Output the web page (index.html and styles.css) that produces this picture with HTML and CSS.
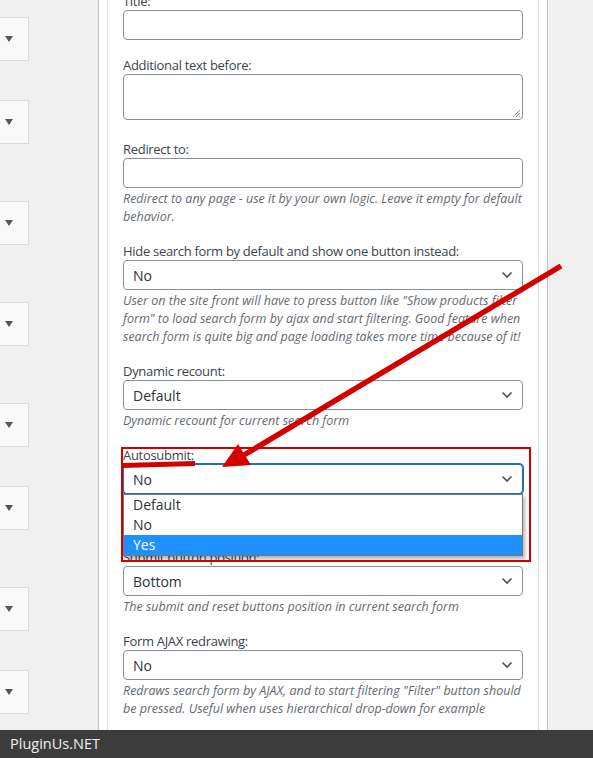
FILE: index.html
```html
<!DOCTYPE html>
<html lang="en">
<head>
<meta charset="utf-8">
<title>Search form settings</title>
<link rel="stylesheet" href="styles.css">
</head>
<body>
<div class="page">
  <aside class="rail">
    <div class="rbox first"><span class="tri"></span></div>
    <div class="rbox near"><span class="tri"></span></div>
    <div class="rbox"><span class="tri"></span></div>
    <div class="rbox"><span class="tri"></span></div>
    <div class="rbox"><span class="tri"></span></div>
    <div class="rbox near"><span class="tri"></span></div>
    <div class="rbox"><span class="tri"></span></div>
    <div class="rbox near"><span class="tri"></span></div>
  </aside>
  <section class="outer">
    <div class="inner">
      <div class="form">
        <div class="group">
          <label class="lbl">Title:</label>
          <div class="input"></div>
        </div>
        <div class="group area">
          <label class="lbl">Additional text before:</label>
          <div class="textarea">
            <svg class="grip" width="9" height="9" viewBox="0 0 9 9"><path d="M8 1L1 8M8 4L4 8M8 7L7 8" stroke="#8c8f94" stroke-width="1" fill="none"/></svg>
          </div>
        </div>
        <div class="group">
          <label class="lbl">Redirect to:</label>
          <div class="input"></div>
          <p class="desc">Redirect to any page - use it by your own logic. Leave it empty for default behavior.</p>
        </div>
        <div class="group">
          <label class="lbl">Hide search form by default and show one button instead:</label>
          <div class="select"><span>No</span><svg class="chev" width="12" height="8" viewBox="0 0 12 8"><path d="M1.5 1.5l4.5 4.5 4.5-4.5" stroke="#50575e" stroke-width="1.7" fill="none"/></svg></div>
          <p class="desc">User on the site front will have to press button like "Show products filter form" to load search form by ajax and start filtering. Good feature when search form is quite big and page loading takes more time because of it!</p>
        </div>
        <div class="group">
          <label class="lbl">Dynamic recount:</label>
          <div class="select"><span>Default</span><svg class="chev" width="12" height="8" viewBox="0 0 12 8"><path d="M1.5 1.5l4.5 4.5 4.5-4.5" stroke="#50575e" stroke-width="1.7" fill="none"/></svg></div>
          <p class="desc">Dynamic recount for current search form</p>
        </div>
        <div class="group open">
          <label class="lbl">Autosubmit:</label>
          <div class="control">
            <div class="select focus"><span>No</span><svg class="chev" width="12" height="8" viewBox="0 0 12 8"><path d="M1.5 1.5l4.5 4.5 4.5-4.5" stroke="#50575e" stroke-width="1.7" fill="none"/></svg></div>
            <ul class="listbox">
              <li class="opt">Default</li>
              <li class="opt">No</li>
              <li class="opt sel">Yes</li>
            </ul>
          </div>
        </div>
        <div class="group">
          <label class="lbl">Submit button position:</label>
          <div class="select"><span>Bottom</span><svg class="chev" width="12" height="8" viewBox="0 0 12 8"><path d="M1.5 1.5l4.5 4.5 4.5-4.5" stroke="#50575e" stroke-width="1.7" fill="none"/></svg></div>
          <p class="desc">The submit and reset buttons position in current search form</p>
        </div>
        <div class="group">
          <label class="lbl">Form AJAX redrawing:</label>
          <div class="select"><span>No</span><svg class="chev" width="12" height="8" viewBox="0 0 12 8"><path d="M1.5 1.5l4.5 4.5 4.5-4.5" stroke="#50575e" stroke-width="1.7" fill="none"/></svg></div>
          <p class="desc">Redraws search form by AJAX, and to start filtering "Filter" button should be pressed. Useful when uses hierarchical drop-down for example</p>
        </div>
      </div>
    </div>
  </section>
</div>

<svg class="marks" width="593" height="758" viewBox="0 0 593 758">
  <rect x="122" y="448" width="408" height="113" fill="none" stroke="#d40000" stroke-width="2"/>
  <line x1="122" y1="465.5" x2="195" y2="463.5" stroke="#d40000" stroke-width="5"/>
  <line x1="561" y1="266" x2="244" y2="455" stroke="#d40000" stroke-width="5.5"/>
  <polygon points="222,467 238,444 251,465" fill="#d40000"/>
</svg>

<footer class="brand">PluginUs.NET</footer>
</body>
</html>
```

FILE: styles.css
```css
* { box-sizing: border-box; }
html, body { margin: 0; padding: 0; }
body {
  background: #f0f0f1;
  font-family: "Open Sans", "Noto Sans", sans-serif;
  color: #3c434a;
  width: 593px;
  height: 758px;
  overflow: hidden;
  position: relative;
}
.page { display: flex; align-items: flex-start; }

.rail { width: 98px; flex: none; display: flex; flex-direction: column; }
.rbox {
  width: 40px;
  height: 44px;
  margin-left: -11px;
  margin-top: 57px;
  background: #f9f9f9;
  border: 1px solid #dcdcde;
  display: flex;
  align-items: center;
  padding-left: 15px;
}
.rbox.first { margin-top: 17px; }
.rbox.near { margin-top: 39px; }
.tri {
  width: 0; height: 0;
  border-left: 4px solid transparent;
  border-right: 4px solid transparent;
  border-top: 6px solid #50575e;
}

.outer {
  width: 450px;
  flex: none;
  background: #fff;
  border-left: 1px solid #c3c4c7;
  border-right: 1px solid #c3c4c7;
  padding: 0 8px;
  min-height: 758px;
}
.inner {
  border-left: 1px solid #dcdcde;
  border-right: 1px solid #dcdcde;
  padding: 0 15px;
  min-height: 758px;
}
.form { margin-top: -8px; }

.group { margin-bottom: 16px; }
.group.area { margin-bottom: 20px; }
.group.open { margin-bottom: 54px; }
.lbl {
  display: block;
  font-size: 13px;
  line-height: 18px;
  letter-spacing: -0.3px;
  color: #3c434a;
}
.input, .select, .textarea {
  width: 400px;
  height: 30px;
  border: 1px solid #8c8f94;
  border-radius: 4px;
  background: #fff;
}
.textarea { height: 46px; display: flex; align-items: flex-end; justify-content: flex-end; padding: 0 1px 1px 0; }
.grip { display: block; }
.select {
  display: flex;
  align-items: center;
  justify-content: space-between;
  padding: 0 9px 0 9px;
  font-size: 14px;
  color: #2c3338;
}
.chev { display: block; }
.select.focus {
  border-color: #2271b1;
  box-shadow: 0 0 0 1px #2271b1;
}
.desc {
  margin: 2px 0 0;
  font-size: 12.5px;
  line-height: 18px;
  font-style: italic;
  color: #646970;
}

.control { position: relative; }
.listbox {
  position: absolute;
  top: 30px;
  left: 0;
  width: 400px;
  margin: 0;
  padding: 0;
  list-style: none;
  background: #fff;
  border: 1px solid #767676;
  box-shadow: 2px 3px 4px rgba(0,0,0,0.3);
  z-index: 2;
}
.opt {
  height: 20px;
  line-height: 20px;
  padding-left: 9px;
  font-size: 14px;
  color: #2c3338;
}
.opt.sel { background: #1e90ff; color: #fff; }

.marks { position: absolute; left: 0; top: 0; z-index: 5; pointer-events: none; }

.brand {
  position: fixed;
  left: 0; right: 0; bottom: 0;
  height: 28px;
  background: #3c3c3c;
  color: #f0f0f0;
  font-size: 14.5px;
  line-height: 28px;
  padding-left: 10px;
  z-index: 6;
}
```
